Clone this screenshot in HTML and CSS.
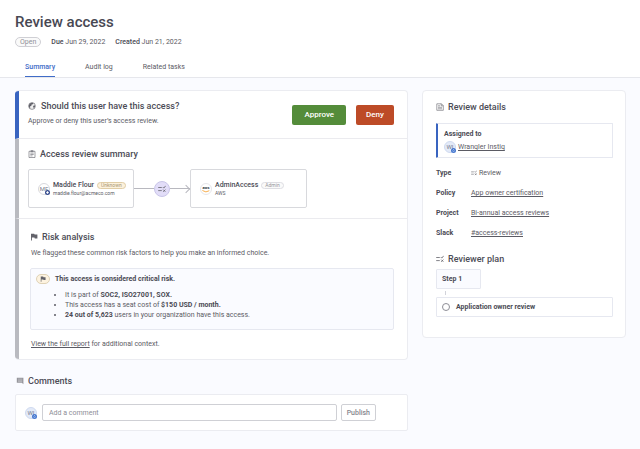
FILE: index.html
```html
<!DOCTYPE html>
<html lang="en">
<head>
<meta charset="utf-8">
<title>Review access</title>
<link rel="stylesheet" href="styles.css">
</head>
<body>
<svg class="defs" aria-hidden="true">
  <symbol id="flag" viewBox="0 0 8 8"><path d="M1 .8h3.2l.4.8h2.8v3.8H4.8l-.4-.8H1.9v3H1z" fill="currentColor"/></symbol>
  <symbol id="rule" viewBox="0 0 8 8"><path d="M.2 2.5h3.6M.2 5.6h3.6M4.8 2.1l1 1L7.7.8M5.2 4.6l2.2 2.2M7.4 4.6L5.2 6.8" fill="none" stroke="currentColor" stroke-width=".8"/></symbol>
</svg>
<header class="page-header">
  <h1>Review access</h1>
  <div class="meta">
    <span class="status">Open</span>
    <span><b>Due</b> Jun 29, 2022</span>
    <span><b>Created</b> Jun 21, 2022</span>
  </div>
  <nav class="tabs">
    <a class="tab active" href="#summary">Summary</a>
    <a class="tab" href="#audit">Audit log</a>
    <a class="tab" href="#tasks">Related tasks</a>
  </nav>
</header>
<main class="layout">
  <div class="primary">
    <article class="card review">
      <section class="decision">
        <div class="question">
          <h2><svg class="icon" viewBox="0 0 8 8"><circle cx="4" cy="4" r="3.4" fill="#eee" stroke="currentColor" stroke-width=".6"/><path d="M.8 4A3.2 3.2 0 0 1 5.4 1.1L4.9 2.3 3.6 2.6 3.4 3.7 2 4.5 2.3 6.5A3.2 3.2 0 0 1 .8 4zM5 4.1l1.8-.9.3 1.4-1.3 1.9z" fill="currentColor"/></svg>Should this user have this access?</h2>
          <p>Approve or deny this user’s access review.</p>
        </div>
        <button class="btn approve" type="button">Approve</button>
        <button class="btn deny" type="button">Deny</button>
      </section>
      <section class="summary" id="summary">
        <h2><svg class="icon" viewBox="0 0 8 8"><path d="M1 1.3h6v6.2H1zM2.9.6h2.2v1H2.9zM2.3 3.1h3.4M2.3 4.5h3.4M2.3 5.9h2.2" fill="none" stroke="currentColor" stroke-width=".6"/></svg>Access review summary</h2>
        <div class="flow">
          <div class="node user">
            <span class="avatar plain">MF<i class="badge navy"><svg viewBox="0 0 6 6"><path d="M3 1.3L4.8 3 3 4.7 1.2 3z" fill="#fff"/></svg></i></span>
            <div><div class="name">Maddie Flour <span class="tag warn">Unknown</span></div><div class="sub">maddie.flour@acmeco.com</div></div>
          </div>
          <span class="line"></span>
          <span class="step-icon"><svg class="icon"><use href="#rule"/></svg></span>
          <span class="line arrow"></span>
          <div class="node target">
            <span class="avatar aws">aws<svg class="smile" viewBox="0 0 8 3"><path d="M.4.5Q4 3.2 7.3.7" fill="none" stroke="#f5a53a" stroke-width=".9"/></svg></span>
            <div><div class="name">AdminAccess <span class="tag">Admin</span></div><div class="sub">AWS</div></div>
          </div>
        </div>
      </section>
      <section class="risk">
        <h2><svg class="icon"><use href="#flag"/></svg>Risk analysis</h2>
        <p>We flagged these common risk factors to help you make an informed choice.</p>
        <div class="alert">
          <span class="flag-pill"><svg class="icon"><use href="#flag"/></svg></span>
          <div>
            <b>This access is considered critical risk.</b>
            <ul>
              <li>It is part of <b>SOC2, ISO27001, SOX.</b></li>
              <li>This access has a seat cost of <b>$150 USD / month.</b></li>
              <li><b>24 out of 5,623</b> users in your organization have this access.</li>
            </ul>
          </div>
        </div>
        <p class="report"><a href="#report">View the full report</a> for additional context.</p>
      </section>
    </article>
    <section class="comments">
      <h2><svg class="icon" viewBox="0 0 8 8"><path d="M.8.8h6.6v6.4L5.8 5.8h-5z" fill="#96969c"/><path d="M2 2.1h4.2M2 3.3h4.2M2 4.5h4.2" stroke="#e0e0e4" stroke-width=".4"/></svg>Comments</h2>
      <form class="card comment-form">
        <span class="avatar">WI<i class="badge"><svg viewBox="0 0 6 6"><path d="M1.6 3.2Q3 5 4.5 3.2M3 1.3v1.2" fill="none" stroke="#dfe8fa" stroke-width=".7"/></svg></i></span>
        <input type="text" placeholder="Add a comment" aria-label="Add a comment">
        <button class="publish" type="button">Publish</button>
      </form>
    </section>
  </div>
  <aside class="card details">
    <h2><svg class="icon" viewBox="0 0 8 8"><path d="M.8.8h4.7l1.8 1.8v4.7H.8zM5.2.8v2h2M2 2.8h2M2 4.3h4M2 5.8h4" fill="none" stroke="currentColor" stroke-width=".6"/></svg>Review details</h2>
    <div class="assigned">
      <b>Assigned to</b>
      <div class="person"><span class="avatar">WI<i class="badge"><svg viewBox="0 0 6 6"><path d="M1.6 3.2Q3 5 4.5 3.2M3 1.3v1.2" fill="none" stroke="#dfe8fa" stroke-width=".7"/></svg></i></span><a href="#user">Wrangler Instig</a></div>
    </div>
    <dl>
      <dt>Type</dt><dd><svg class="icon small"><use href="#rule"/></svg>Review</dd>
      <dt>Policy</dt><dd><a href="#policy">App owner certification</a></dd>
      <dt>Project</dt><dd><a href="#project">Bi-annual access reviews</a></dd>
      <dt>Slack</dt><dd><a href="#slack">#access-reviews</a></dd>
    </dl>
    <h2 class="plan-title"><svg class="icon"><use href="#rule"/></svg>Reviewer plan</h2>
    <div class="step">Step 1</div>
    <div class="connector"></div>
    <div class="task"><span class="ring"></span>Application owner review</div>
  </aside>
</main>
</body>
</html>
```
FILE: styles.css
```css
* { box-sizing: border-box; }
body {
  margin: 0;
  background: #fafbff;
  color: #5b5b64;
  font: 7px/10px Roboto, "Liberation Sans", sans-serif;
}
h1, h2, p, ul, dl, dd { margin: 0; padding: 0; }
b, dt { font-weight: 700; color: #4a4a54; }
a { color: inherit; text-underline-offset: 1px; }
.defs { display: none; }
.icon { width: 8px; height: 8px; flex: none; color: #62626a; }
.icon.small { width: 6px; height: 6px; }
h1 { font-size: 15px; line-height: 20px; font-weight: 500; color: #484853; }
h2 {
  display: flex;
  align-items: center;
  gap: 4px;
  font-size: 9px;
  line-height: 12px;
  font-weight: 500;
  color: #4c4c56;
}
.page-header {
  background: #fff;
  border-bottom: 1px solid #e6e7ec;
  padding: 12px 15px 0;
}
.meta { display: flex; align-items: center; gap: 10px; margin-top: 5px; }
.meta b { font-weight: 500; }
.status {
  border: 1px solid #cfcfd4;
  border-radius: 6px;
  background: #fafafa;
  color: #909097;
  padding: 0 4px;
  line-height: 8px;
}
.tabs { display: flex; gap: 30px; margin-top: 12px; padding-left: 10px; }
.tab { padding: 3px 0 4px; line-height: 10px; text-decoration: none; }
.tab.active { color: #3f6cc8; font-weight: 500; border-bottom: 1px solid #3f6cc8; }
.layout {
  display: grid;
  grid-template-columns: minmax(0, 1fr) 204px;
  gap: 14px;
  align-items: start;
  padding: 12px 14px 18px 15px;
}
.card { background: #fff; border: 1px solid #ebecf1; border-radius: 4px; }
.review { border-left: 0; overflow: hidden; }
.review > section { border-left: 4px solid #b9bac0; }
.review > .decision {
  display: flex;
  align-items: center;
  gap: 10px;
  padding: 0 13px 0 9px;
  border-left-color: #3964c0;
  border-bottom: 1px solid #ebebef;
}
.question { flex: 1; padding: 9px 0 12px; }
.question p { margin-top: 4px; }
.decision h2 { gap: 5px; }
.btn {
  height: 20px;
  padding: 0 12px;
  border: 0;
  border-radius: 2px;
  color: #fff;
  font: 500 8px/20px Roboto, "Liberation Sans", sans-serif;
}
.approve { background: #548c3a; }
.deny { background: #bd4b27; padding: 0 10px; }
.summary { padding: 9px 9px 10px; border-bottom: 1px solid #ebebef; }
.flow { display: flex; align-items: center; margin-top: 9px; }
.node {
  display: flex;
  align-items: center;
  gap: 3px;
  height: 39px;
  padding: 0 9px;
  border: 1px solid #d8d9dd;
  border-radius: 2px;
  background: #fff;
}
.user { width: 106px; }
.target { width: 117px; }
.name { display: flex; align-items: center; gap: 3px; font-weight: 500; line-height: 9px; white-space: nowrap; color: #4c4c56; }
.sub { font-size: 5px; line-height: 7px; }
.tag {
  border: 1px solid #dddde2;
  border-radius: 4px;
  background: #fafafa;
  color: #94949a;
  font-size: 5px;
  font-weight: 400;
  line-height: 5px;
  padding: 0 3px;
}
.tag.warn { background: #fcf1dc; border-color: #e0cda6; color: #a79674; }
.avatar {
  position: relative;
  flex: none;
  width: 12px;
  height: 12px;
  border: 1px solid #cfdaf0;
  border-radius: 50%;
  background: #e3eaf8;
  color: #777d8c;
  font-size: 6px;
  line-height: 10px;
  text-align: center;
}
.avatar.plain { background: #fff; border-color: #d8d8dd; }
.badge {
  position: absolute;
  right: -1px;
  bottom: -1px;
  display: block;
  width: 5px;
  height: 5px;
  border-radius: 50%;
  background: #4678d0;
}
.badge svg { display: block; width: 5px; height: 5px; }
.badge.navy { background: #344b8e; }
.avatar.aws { background: #fff; border-color: #e6e6ea; font-size: 4px; line-height: 8px; font-weight: 700; color: #34343c; }
.smile { position: absolute; left: 1px; bottom: 1px; width: 8px; height: 3px; }
.line { position: relative; width: 20px; height: 1px; background: #b8b8bf; }
.arrow::after {
  content: "";
  position: absolute;
  right: 1px;
  top: -2px;
  width: 5px;
  height: 5px;
  border: solid #b8b8bf;
  border-width: 1px 1px 0 0;
  transform: rotate(45deg);
}
.step-icon {
  display: grid;
  place-items: center;
  width: 16px;
  height: 16px;
  border: 1px solid #c9c5e8;
  border-radius: 50%;
  background: #e2ddf8;
}
.risk { padding: 12px 13px 10px 11px; }
.risk p { margin-top: 5px; padding-left: 1px; }
.alert {
  display: flex;
  align-items: flex-start;
  gap: 5px;
  margin-top: 10px;
  padding: 5px 5px 9px;
  border: 1px solid #e6e8f0;
  border-radius: 2px;
  background: #fafbff;
}
.flag-pill {
  display: grid;
  place-items: center;
  width: 14px;
  height: 10px;
  border: 1px solid #dfd2b6;
  border-radius: 5px;
  background: #fdf3e0;
}
.flag-pill .icon { width: 6px; height: 6px; }
.alert ul { margin-top: 6px; padding-left: 10px; }
.risk .report { margin-top: 9px; }
.comments { margin-top: 15px; }
.comments h2 { padding-left: 1px; }
.comment-form { display: flex; align-items: center; margin-top: 7px; padding: 9px 31px 9px 9px; border-radius: 2px; }
.comment-form input {
  flex: 1;
  min-width: 0;
  height: 17px;
  margin: 0 4px 0 5px;
  padding: 0 6px;
  border: 1px solid #cfd0d5;
  border-radius: 2px;
  font: inherit;
}
.comment-form input::placeholder { color: #8e8e96; }
.publish {
  height: 17px;
  padding: 0 5px;
  border: 1px solid #cfd0d5;
  border-radius: 2px;
  background: #fff;
  color: #85858d;
  font: inherit;
  font-weight: 500;
}
.details { padding: 10px 12px 20px 13px; }
.assigned {
  margin-top: 10px;
  padding: 5px 6px 4px;
  border: 1px solid #e6e8f0;
  border-left: 2px solid #3964c0;
  border-radius: 1px;
}
.person { display: flex; align-items: center; gap: 2px; margin-top: 2px; }
.details dl {
  display: grid;
  grid-template-columns: 35px 1fr;
  row-gap: 10px;
  margin-top: 10px;
}
.details dd { display: flex; align-items: center; gap: 2px; }
.plan-title { margin-top: 15px; }
.step {
  width: 45px;
  margin-top: 4px;
  padding: 4px 5px;
  border: 1px solid #e6e8f0;
  border-radius: 1px;
  background: #fafbff;
  font-weight: 700;
  color: #4a4a54;
}
.connector { width: 1px; height: 4px; margin: 2px 9px; background: #d2d3da; }
.task {
  display: flex;
  align-items: center;
  gap: 6px;
  padding: 4px 5px;
  border: 1px solid #e6e8f0;
  border-radius: 1px;
  font-weight: 700;
  color: #4a4a54;
}
.ring { width: 8px; height: 8px; border: 1px solid #8e8e96; border-radius: 50%; }
```
